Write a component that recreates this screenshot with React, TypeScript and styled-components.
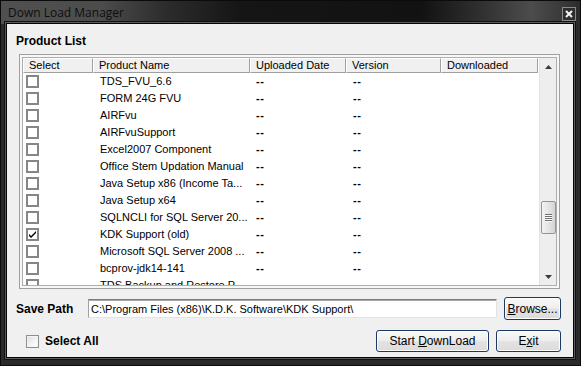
import React from 'react';
import styled, { createGlobalStyle } from 'styled-components';

const GlobalStyle = createGlobalStyle`
  html, body { margin: 0; padding: 0; background: #1b1b1b; }
  body { width: 581px; height: 366px; overflow: hidden; font-family: "Liberation Sans", Arial, sans-serif; }
  * { box-sizing: border-box; }
`;

const Window = styled.div`
  width: 581px;
  height: 366px;
  display: flex;
  flex-direction: column;
  background: #2a2a2a;
  border: 1px solid #0b0b0b;
`;

const TitleBar = styled.div`
  height: 23px;
  flex: none;
  display: flex;
  align-items: center;
  justify-content: space-between;
  padding: 0 3px 0 7px;
  background: linear-gradient(90deg, #505050 0px, #4c4c4c 100px, #2c2c2c 165px, #151515 240px, #121212 420px, #303030 480px, #4c4c4c 530px, #3a3a3a 560px, #2a2a2a 580px);
`;

const Title = styled.span`
  font-family: "Open Sans", "Liberation Sans", sans-serif;
  font-size: 12px;
  color: #0e0e0e;
`;

const CloseButton = styled.div`
  width: 14px;
  height: 14px;
  margin-top: 2px;
  margin-right: 1px;
  border: 1px solid #8a8a8a;
  background: #2e2e2e;
  display: flex;
  align-items: center;
  justify-content: center;
`;

const Frame = styled.div`
  flex: 1;
  display: flex;
  padding: 0 7px 8px 6px;
`;

const Client = styled.div`
  flex: 1;
  display: flex;
  flex-direction: column;
  background: #f0f0f0;
  padding: 0 12px 0 9px;
  box-shadow: 0 0 0 1px #050505, 0 0 0 2px #5c5c5c, 0 0 0 3px #111;
  font-size: 11px;
  color: #000;
`;

const SectionTitle = styled.div`
  margin-top: 10px;
  font-weight: bold;
  font-size: 12px;
  line-height: 14px;
`;

const ListBox = styled.div`
  margin: 6px 0 0 3px;
  width: 541px;
  height: 235px;
  border: 1px solid #a0a0a0;
  padding: 2px;
  background: #f7f7f7;
  display: flex;
`;

const ListInner = styled.div`
  flex: 1;
  display: flex;
  border: 1px solid #adadad;
  background: #fff;
  overflow: hidden;
`;

const Table = styled.div`
  flex: 1;
  display: flex;
  flex-direction: column;
  overflow: hidden;
`;

const columns = '70px 157px 96px 95px 97px';

const HeaderRow = styled.div`
  display: grid;
  grid-template-columns: ${columns};
  height: 15px;
  flex: none;
`;

const HeaderCell = styled.div`
  border-top: 1px solid #fff;
  border-left: 1px solid #fff;
  border-right: 1px solid #a0a0a0;
  border-bottom: 1px solid #a0a0a0;
  background: #f0f0f0;
  padding-left: 5px;
  line-height: 13px;
  white-space: nowrap;
  overflow: hidden;
`;

const Body = styled.div`
  flex: 1;
  overflow: hidden;
`;

const Row = styled.div`
  display: grid;
  grid-template-columns: ${columns};
  height: 17px;
  align-items: center;
`;

const Cell = styled.div<{ $pad?: number }>`
  padding-left: ${(p) => p.$pad ?? 6}px;
  white-space: nowrap;
  overflow: hidden;
  line-height: 17px;
`;

const Dash = styled(Cell)`
  font-weight: bold;
  letter-spacing: 0.5px;
`;

const RowCheck = styled.div`
  width: 13px;
  height: 13px;
  margin-left: 3px;
  border: 2px solid #868686;
  background: #fff;
  display: flex;
  align-items: center;
  justify-content: center;
`;

const ScrollBar = styled.div`
  width: 17px;
  flex: none;
  display: flex;
  flex-direction: column;
  background: #eeeeee;
  border-left: 1px solid #e2e2e2;
`;

const ScrollArrow = styled.div`
  height: 17px;
  flex: none;
  display: flex;
  align-items: center;
  justify-content: center;
`;

const Track = styled.div`
  flex: 1;
  display: flex;
  flex-direction: column;
  align-items: center;
`;

const Thumb = styled.div`
  width: 15px;
  height: 33px;
  margin-top: 126px;
  border: 1px solid #959595;
  border-radius: 2px;
  background: linear-gradient(90deg, #f3f3f3 0%, #e4e4e4 50%, #d4d4d4 100%);
  display: flex;
  flex-direction: column;
  align-items: center;
  justify-content: center;
  gap: 1px;
`;

const Grip = styled.div`
  width: 7px;
  height: 1px;
  background: #6e6e6e;
  box-shadow: 0 1px 0 #fafafa;
`;

const SaveRow = styled.div`
  margin-top: 8px;
  height: 23px;
  display: flex;
  align-items: center;
`;

const Label = styled.span`
  font-weight: bold;
  font-size: 12px;
`;

const SaveLabel = styled(Label)`
  width: 72px;
`;

const PathInput = styled.div`
  width: 409px;
  height: 19px;
  margin-top: -1px;
  background: #fff;
  border: 1px solid;
  border-color: #7c7c7c #e3e3e3 #e3e3e3 #a0a0a0;
  box-shadow: inset 0 1px 0 #a9a9a9;
  padding: 1px 0 0 2px;
  line-height: 16px;
  font-size: 11px;
  white-space: nowrap;
  overflow: hidden;
`;

const Button = styled.div<{ $w: number; $h: number }>`
  width: ${(p) => p.$w}px;
  height: ${(p) => p.$h}px;
  border: 1px solid #1b3a63;
  border-radius: 3px;
  background: linear-gradient(180deg, #f8f8f8 0%, #efefef 45%, #e2e2e2 55%, #dbdbdb 100%);
  box-shadow: inset 0 0 0 1px #fdfdfd;
  display: flex;
  align-items: center;
  justify-content: center;
  font-size: 12px;
  color: #000;
  u { text-decoration: underline; text-underline-offset: 1px; }
`;

const BrowseButton = styled(Button)`
  margin-left: 7px;
`;

const BottomRow = styled.div`
  margin-top: 10px;
  height: 22px;
  display: flex;
  align-items: center;
`;

const SelectAll = styled.label`
  display: flex;
  align-items: center;
  gap: 6px;
  margin-left: 10px;
  flex: 1;
`;

const Box = styled.span`
  width: 13px;
  height: 13px;
  border: 1px solid #8e8f8f;
  background: linear-gradient(135deg, #dcdcdc 0%, #f6f6f6 60%, #fff 100%);
  box-shadow: inset 0 0 0 1px #f4f4f4;
`;

const Buttons = styled.div`
  display: flex;
  gap: 7px;
`;

const products = [
  'TDS_FVU_6.6',
  'FORM 24G FVU',
  'AIRFvu',
  'AIRFvuSupport',
  'Excel2007 Component',
  'Office Stem Updation Manual',
  'Java Setup x86 (Income Ta...',
  'Java Setup x64',
  'SQLNCLI for SQL Server 20...',
  'KDK Support (old)',
  'Microsoft SQL Server 2008 ...',
  'bcprov-jdk14-141',
  'TDS Backup and Restore P...',
];

const Check = () => (
  <svg width="9" height="9" viewBox="0 0 9 9">
    <path d="M1 4 L3 6 L8 1 L8 3 L3 8 L1 6 Z" fill="#000" />
  </svg>
);

const App: React.FC = () => (
  <>
    <GlobalStyle />
    <Window>
      <TitleBar>
        <Title>Down Load Manager</Title>
        <CloseButton>
          <svg width="8" height="8" viewBox="0 0 8 8">
            <path d="M1 1 L7 7 M7 1 L1 7" stroke="#f4f4f4" strokeWidth="2" />
          </svg>
        </CloseButton>
      </TitleBar>
      <Frame>
        <Client>
          <SectionTitle>Product List</SectionTitle>
          <ListBox>
            <ListInner>
              <Table>
                <HeaderRow>
                  <HeaderCell>Select</HeaderCell>
                  <HeaderCell>Product Name</HeaderCell>
                  <HeaderCell>Uploaded Date</HeaderCell>
                  <HeaderCell>Version</HeaderCell>
                  <HeaderCell>Downloaded</HeaderCell>
                </HeaderRow>
                <Body>
                  {products.map((p) => (
                    <Row key={p}>
                      <Cell $pad={0}>
                        <RowCheck>{p === 'KDK Support (old)' && <Check />}</RowCheck>
                      </Cell>
                      <Cell $pad={7}>{p}</Cell>
                      <Dash $pad={6}>--</Dash>
                      <Dash $pad={7}>--</Dash>
                      <Cell />
                    </Row>
                  ))}
                </Body>
              </Table>
              <ScrollBar>
                <ScrollArrow>
                  <svg width="7" height="4" viewBox="0 0 7 4">
                    <path d="M3.5 0 L7 4 L0 4 Z" fill="#3c3c3c" />
                  </svg>
                </ScrollArrow>
                <Track>
                  <Thumb>
                    <Grip />
                    <Grip />
                    <Grip />
                    <Grip />
                  </Thumb>
                </Track>
                <ScrollArrow>
                  <svg width="7" height="4" viewBox="0 0 7 4">
                    <path d="M0 0 L7 0 L3.5 4 Z" fill="#3c3c3c" />
                  </svg>
                </ScrollArrow>
              </ScrollBar>
            </ListInner>
          </ListBox>
          <SaveRow>
            <SaveLabel>Save Path</SaveLabel>
            <PathInput>C:\Program Files (x86)\K.D.K. Software\KDK Support\</PathInput>
            <BrowseButton $w={57} $h={23}>
              <span><u>B</u>rowse...</span>
            </BrowseButton>
          </SaveRow>
          <BottomRow>
            <SelectAll>
              <Box />
              <Label>Select All</Label>
            </SelectAll>
            <Buttons>
              <Button $w={113} $h={22}>
                <span>Start <u>D</u>ownLoad</span>
              </Button>
              <Button $w={65} $h={22}>
                <span>E<u>x</u>it</span>
              </Button>
            </Buttons>
          </BottomRow>
        </Client>
      </Frame>
    </Window>
  </>
);

export default App;
